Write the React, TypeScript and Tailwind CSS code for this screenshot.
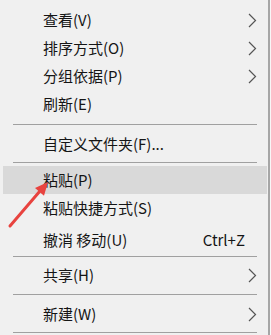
import React from "react";

type Item = {
  label: string;
  sub?: boolean;
  shortcut?: string;
  active?: boolean;
  className?: string;
};

const Chevron = () => (
  <svg width="10" height="15" viewBox="0 0 10 15" className="shrink-0 mt-[1px]">
    <polyline
      points="2,1 8.5,7.5 2,14"
      fill="none"
      stroke="#555"
      strokeWidth="1.2"
    />
  </svg>
);

const Row = ({ item }: { item: Item }) => (
  <div
    className={
      "h-[28px] flex items-center ml-[3px] mr-[1px] pl-[40px] pr-[10px] " +
      (item.active ? "bg-[#d9d9d9] " : "") +
      (item.className ?? "")
    }
  >
    <span className="flex-1 whitespace-nowrap">{item.label}</span>
    {item.shortcut && (
      <span className="whitespace-nowrap mr-[12px]">{item.shortcut}</span>
    )}
    {item.sub && <Chevron />}
  </div>
);

const Sep = ({ h, top }: { h: string; top: string }) => (
  <div className={"relative " + h}>
    <div className={"absolute left-[13px] right-[11px] h-px bg-[#a0a0a0] " + top} />
  </div>
);

export default function App() {
  return (
    <div className="w-[271px] h-[335px] bg-[#f7f7f7] overflow-hidden relative">
      <div
        className="w-[270px] h-[335px] bg-[#f0f0f0] border-r-2 border-[#a6a6a6] pt-[6px] text-[15px] text-[#151515]"
        style={{ fontFamily: '"Noto Sans CJK SC", "Noto Sans", sans-serif' }}
      >
        <Row item={{ label: "查看(V)", sub: true }} />
        <Row item={{ label: "排序方式(O)", sub: true }} />
        <Row item={{ label: "分组依据(P)", sub: true }} />
        <Row item={{ label: "刷新(E)" }} />
        <Sep h="h-[12px]" top="top-[6px]" />
        <Row item={{ label: "自定义文件夹(F)..." }} />
        <Sep h="h-[8px]" top="top-[4px]" />
        <Row item={{ label: "粘贴(P)", active: true }} />
        <Row item={{ label: "粘贴快捷方式(S)" }} />
        <Row item={{ label: "撤消 移动(U)", shortcut: "Ctrl+Z", className: "mt-[4px]" }} />
        <Sep h="h-[7px]" top="top-[2px]" />
        <Row item={{ label: "共享(H)", sub: true }} />
        <Sep h="h-[11px]" top="top-[5px]" />
        <Row item={{ label: "新建(W)", sub: true }} />
        <Sep h="h-[8px]" top="top-[4px]" />
      </div>

      {/* red annotation arrow */}
      <svg
        className="absolute left-0 top-0 pointer-events-none"
        width="271"
        height="335"
      >
        <line
          x1="10"
          y1="226"
          x2="40"
          y2="191"
          stroke="#e8433f"
          strokeWidth="3"
          strokeLinecap="round"
        />
        <polygon points="48,182 44,195.7 35,187.9" fill="#e8433f" />
      </svg>
    </div>
  );
}
